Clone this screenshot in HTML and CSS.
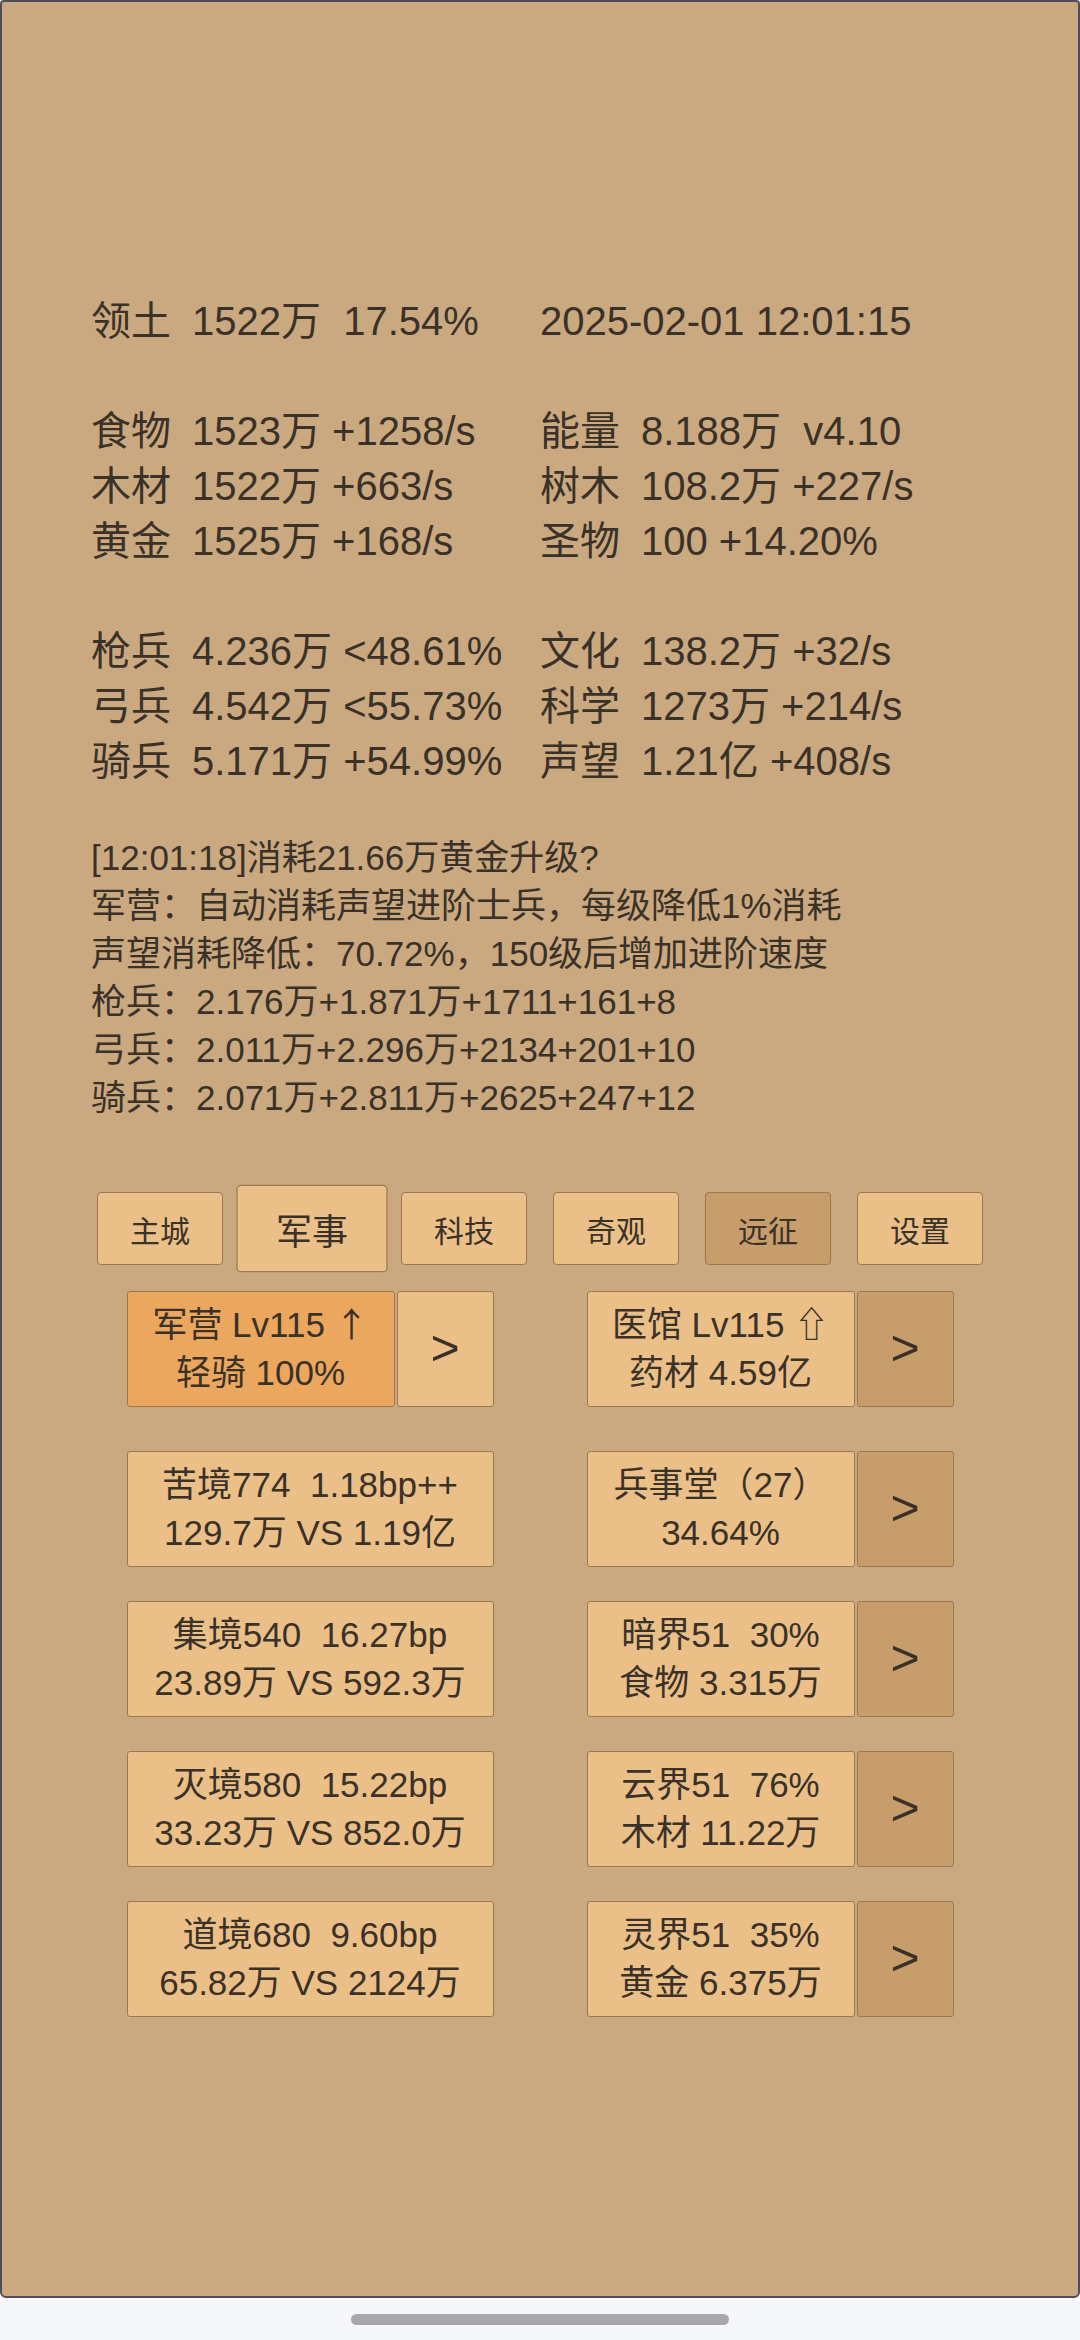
FILE: index.html
```html
<!DOCTYPE html>
<html lang="zh">
<head>
<meta charset="utf-8">
<title>game</title>
<link rel="stylesheet" href="styles.css">
</head>
<body>
<div class="panel">
  <div class="stats">
    <span class="lbl">领土</span><span class="val">1522万  17.54%</span><span class="wide">2025-02-01 12:01:15</span>
    <div class="blank"></div>
    <span class="lbl">食物</span><span class="val">1523万 +1258/s</span><span class="lbl">能量</span><span class="val">8.188万  v4.10</span>
    <span class="lbl">木材</span><span class="val">1522万 +663/s</span><span class="lbl">树木</span><span class="val">108.2万 +227/s</span>
    <span class="lbl">黄金</span><span class="val">1525万 +168/s</span><span class="lbl">圣物</span><span class="val">100 +14.20%</span>
    <div class="blank"></div>
    <span class="lbl">枪兵</span><span class="val">4.236万 &lt;48.61%</span><span class="lbl">文化</span><span class="val">138.2万 +32/s</span>
    <span class="lbl">弓兵</span><span class="val">4.542万 &lt;55.73%</span><span class="lbl">科学</span><span class="val">1273万 +214/s</span>
    <span class="lbl">骑兵</span><span class="val">5.171万 +54.99%</span><span class="lbl">声望</span><span class="val">1.21亿 +408/s</span>
  </div>

  <div class="log">
    <div>[12:01:18]消耗21.66万黄金升级?</div>
    <div>军营：自动消耗声望进阶士兵，每级降低1%消耗</div>
    <div>声望消耗降低：70.72%，150级后增加进阶速度</div>
    <div>枪兵：2.176万+1.871万+1711+161+8</div>
    <div>弓兵：2.011万+2.296万+2134+201+10</div>
    <div>骑兵：2.071万+2.811万+2625+247+12</div>
  </div>

  <div class="tabs">
    <div class="tab">主城</div>
    <div class="tab active">军事</div>
    <div class="tab">科技</div>
    <div class="tab">奇观</div>
    <div class="tab dark">远征</div>
    <div class="tab">设置</div>
  </div>

  <div class="grid">
    <div class="row first">
      <div class="group">
        <div class="card orange">军营 Lv115 <span class="up">↑</span><br>轻骑 100%</div>
        <div class="arrow">&gt;</div>
      </div>
      <div class="group">
        <div class="card">医馆 Lv115 ⇧<br>药材 4.59亿</div>
        <div class="arrow dark">&gt;</div>
      </div>
    </div>
    <div class="row">
      <div class="group">
        <div class="card full">苦境774  1.18bp++<br>129.7万 VS 1.19亿</div>
      </div>
      <div class="group">
        <div class="card">兵事堂（27）<br>34.64%</div>
        <div class="arrow dark">&gt;</div>
      </div>
    </div>
    <div class="row">
      <div class="group">
        <div class="card full">集境540  16.27bp<br>23.89万 VS 592.3万</div>
      </div>
      <div class="group">
        <div class="card">暗界51  30%<br>食物 3.315万</div>
        <div class="arrow dark">&gt;</div>
      </div>
    </div>
    <div class="row">
      <div class="group">
        <div class="card full">灭境580  15.22bp<br>33.23万 VS 852.0万</div>
      </div>
      <div class="group">
        <div class="card">云界51  76%<br>木材 11.22万</div>
        <div class="arrow dark">&gt;</div>
      </div>
    </div>
    <div class="row">
      <div class="group">
        <div class="card full">道境680  9.60bp<br>65.82万 VS 2124万</div>
      </div>
      <div class="group">
        <div class="card">灵界51  35%<br>黄金 6.375万</div>
        <div class="arrow dark">&gt;</div>
      </div>
    </div>
  </div>
</div>
<div class="home-bar"></div>
</body>
</html>
```

FILE: styles.css
```css
* { box-sizing: border-box; }

html, body {
  margin: 0;
  padding: 0;
  background: #f6f7f9;
}

body {
  width: 1080px;
  height: 2340px;
  overflow: hidden;
  font-family: "Liberation Sans", "Noto Sans CJK SC", sans-serif;
  color: #3a3128;
}

.panel {
  width: 1080px;
  height: 2298px;
  background: #caa981;
  border: 2px solid #4e4c5c;
  border-radius: 4px 4px 6px 6px;
  padding-top: 292px;
}

.stats {
  display: grid;
  grid-template-columns: 101px 348px 101px auto;
  grid-auto-rows: 55px;
  padding-left: 89px;
  font-size: 40px;
  line-height: 55px;
}

.stats .val, .stats .wide {
  white-space: pre;
}

.stats .wide {
  grid-column: 3 / 5;
}

.stats .blank {
  grid-column: 1 / 5;
}

.log {
  margin-top: 45px;
  padding-left: 89px;
  font-size: 35px;
  line-height: 48px;
}

.tabs {
  display: flex;
  justify-content: center;
  gap: 26px;
  margin-top: 70px;
}

.tab {
  width: 126px;
  height: 73px;
  display: flex;
  align-items: center;
  justify-content: center;
  font-size: 30px;
  background: #ebc088;
  border: 1.5px solid #9a7850;
  border-radius: 4px;
}

.tab.active {
  transform: scale(1.2);
}

.tab.dark {
  background: #c89d6c;
}

.grid {
  width: 920px;
  margin: 26px auto 0;
}

.row {
  display: flex;
  margin-top: 34px;
}

.row.first {
  margin-top: 0;
  margin-bottom: 44px;
}

.group {
  width: 460px;
  display: flex;
  justify-content: center;
  gap: 2px;
}

.card {
  width: 268px;
  height: 116px;
  background: #ebc088;
  border: 1.5px solid #9a7850;
  border-radius: 3px;
  font-size: 35px;
  line-height: 48px;
  text-align: center;
  white-space: pre;
  padding-top: 9px;
}

.card .up {
  font-family: "Noto Sans CJK SC", sans-serif;
  font-size: 34px;
  line-height: 40px;
}

.card.full {
  width: 367px;
}

.card.orange {
  background: #eca75f;
}

.arrow {
  width: 97px;
  height: 116px;
  background: #ebc088;
  border: 1.5px solid #9a7850;
  border-radius: 3px;
  display: flex;
  align-items: center;
  justify-content: center;
  font-size: 50px;
  padding-bottom: 2px;
}

.arrow.dark {
  background: #c89d6c;
}

.home-bar {
  width: 378px;
  height: 11px;
  margin: 16px auto 0;
  border-radius: 6px;
  background: #a9a9ab;
}
```
